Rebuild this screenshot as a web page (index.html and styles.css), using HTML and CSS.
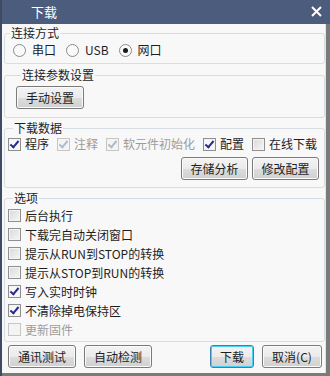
FILE: index.html
```html
<!DOCTYPE html>
<html lang="zh-CN">
<head>
  <meta charset="UTF-8">
  <title>下载</title>
  <link rel="stylesheet" href="styles.css">
</head>
<body>
  <div class="janela">
    <div class="titulo">
      <span class="titulo-texto">下载</span>
      <svg class="fechar" width="11" height="11" viewBox="0 0 11 11"><path d="M1 1L10 10M10 1L1 10" stroke="#fff" stroke-width="2"/></svg>
    </div>

    <div class="conteudo">
      <fieldset class="grupo g1">
        <legend>连接方式</legend>
        <div class="linha-radio">
          <label class="op"><span class="radio"></span>串口</label>
          <label class="op"><span class="radio"></span>USB</label>
          <label class="op"><span class="radio on"></span>网口</label>
        </div>
      </fieldset>

      <fieldset class="grupo g2">
        <legend>连接参数设置</legend>
        <button class="btn manual">手动设置</button>
      </fieldset>

      <fieldset class="grupo g3">
        <legend>下载数据</legend>
        <div class="linha-check">
          <label class="op"><span class="cb on"></span>程序</label>
          <label class="op off"><span class="cb on"></span>注释</label>
          <label class="op off"><span class="cb on"></span>软元件初始化</label>
          <label class="op"><span class="cb on"></span>配置</label>
          <label class="op"><span class="cb"></span>在线下载</label>
        </div>
        <div class="linha-botoes">
          <button class="btn">存储分析</button>
          <button class="btn">修改配置</button>
        </div>
      </fieldset>

      <fieldset class="grupo g4">
        <legend>选项</legend>
        <label class="item"><span class="cb"></span>后台执行</label>
        <label class="item"><span class="cb"></span>下载完自动关闭窗口</label>
        <label class="item"><span class="cb"></span>提示从RUN到STOP的转换</label>
        <label class="item"><span class="cb"></span>提示从STOP到RUN的转换</label>
        <label class="item"><span class="cb on"></span>写入实时时钟</label>
        <label class="item"><span class="cb on"></span>不清除掉电保持区</label>
        <label class="item off"><span class="cb"></span>更新固件</label>
      </fieldset>

      <div class="rodape">
        <button class="btn largo">通讯测试</button>
        <button class="btn largo">自动检测</button>
        <span class="espaco"></span>
        <button class="btn padrao">下载</button>
        <button class="btn cancelar">取消(C)</button>
      </div>
    </div>
  </div>
</body>
</html>
```

FILE: styles.css
```css
* {
  box-sizing: border-box;
}
body {
  margin: 0;
  background: #7a7a7a;
  font-family: "Noto Sans CJK SC", "Noto Sans", sans-serif;
  font-size: 12px;
  color: #1e1e1e;
}
.janela {
  width: 330px;
  height: 376px;
  border-left: 2px solid #3e4b62;
}
.titulo {
  height: 24px;
  background: #4b5c7d;
  display: flex;
  align-items: center;
  padding: 0 8px 0 29px;
  color: #fff;
  font-size: 13px;
}
.titulo-texto {
  flex: 1;
  line-height: 14px;
}
.fechar {
  margin-top: -1px;
}
.conteudo {
  width: 324px;
  height: 349px;
  background: #f8f8f8;
  border-right: 1px solid #e2e2e2;
  padding: 2px 0 0 2px;
}
.grupo {
  margin: 0;
  padding: 0;
  min-width: 0;
  border: 1px solid #d6dee4;
  border-radius: 3px;
}
.grupo legend {
  margin-left: 5px;
  padding: 0 1px;
  line-height: 14px;
}
.g2 {
  margin-top: 4px;
  padding: 4px 0 8px 11px;
}
.g3 {
  margin-top: 3px;
  padding: 2px 0 7px 3px;
}
.g4 {
  margin-top: 3px;
  padding: 1px 0 2px 3px;
}
.linha-radio {
  display: flex;
  gap: 10px;
  padding: 3px 0 6px 8px;
}
.op {
  display: flex;
  align-items: center;
  gap: 6px;
  line-height: 14px;
  height: 14px;
  white-space: nowrap;
  flex-shrink: 0;
}
.linha-check {
  display: flex;
  gap: 8px;
}
.linha-check .op {
  gap: 4px;
}
.off {
  color: #9c9c9c;
}
.radio {
  width: 13px;
  height: 13px;
  border: 1px solid #8a8a8a;
  border-radius: 50%;
  background: #fafafa;
  display: flex;
  align-items: center;
  justify-content: center;
}
.radio.on::after {
  content: "";
  width: 5px;
  height: 5px;
  border-radius: 50%;
  background: #1a1a1a;
}
.cb {
  width: 13px;
  height: 13px;
  flex-shrink: 0;
  border: 1px solid #8f8f8f;
  background: linear-gradient(135deg, #d9d9d9, #f6f6f6);
  box-shadow: inset 0 0 0 1px #f4f4f4;
  position: relative;
}
.cb.on {
  background: #f7f7f7;
}
.cb.on::after {
  content: "";
  position: absolute;
  left: 3px;
  top: 0px;
  width: 3px;
  height: 7px;
  border: solid #2a2a8e;
  border-width: 0 2px 2px 0;
  transform: rotate(40deg);
}
.off .cb {
  border-color: #c6c6c6;
  background: #f4f4f4;
}
.off .cb.on::after {
  border-color: #b3b8cc;
}
.linha-botoes {
  display: flex;
  justify-content: flex-end;
  gap: 4px;
  margin-top: 6px;
  padding-right: 5px;
}
.item {
  display: flex;
  align-items: center;
  gap: 4px;
  height: 19px;
  line-height: 14px;
  white-space: nowrap;
}
.btn {
  font-family: inherit;
  font-size: 12px;
  color: #1e1e1e;
  height: 23px;
  width: 67px;
  padding: 0;
  border: 1px solid #7a7a7a;
  border-radius: 3px;
  background: linear-gradient(#f3f3f3 0%, #ebebeb 50%, #dddddd 51%, #d0d0d0 100%);
  box-shadow: inset 0 0 0 1px #fbfbfb;
  line-height: 14px;
}
.manual {
  width: 68px;
}
.rodape {
  display: flex;
  gap: 8px;
  margin-top: 3px;
  padding: 0 3px 0 4px;
}
.largo {
  width: 68px;
}
.espaco {
  flex: 1;
}
.padrao {
  width: 44px;
  border-color: #3c7fb1;
  box-shadow: inset 0 0 0 1px #48d0f8;
}
.cancelar {
  width: 60px;
}
```
